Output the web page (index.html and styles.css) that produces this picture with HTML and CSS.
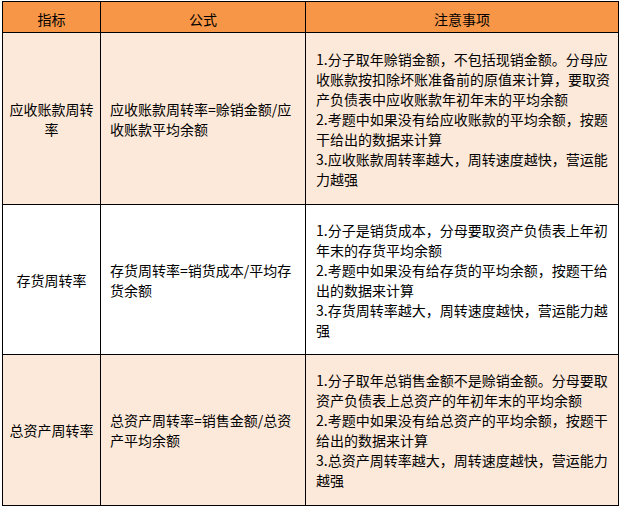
FILE: index.html
```html
<!DOCTYPE html>
<html lang="zh-CN">
<head>
<meta charset="utf-8">
<title>周转率指标</title>
<link rel="stylesheet" href="styles.css">
</head>
<body>
<table class="ratio-table">
  <colgroup>
    <col class="col-name">
    <col class="col-formula">
    <col class="col-notes">
  </colgroup>
  <thead>
    <tr class="row-head">
      <th>指标</th>
      <th>公式</th>
      <th>注意事项</th>
    </tr>
  </thead>
  <tbody>
    <tr class="row-a tint">
      <td class="name">应收账款周转率</td>
      <td class="formula">应收账款周转率=赊销金额/应收账款平均余额</td>
      <td class="notes">
        <div>1.分子取年赊销金额，不包括现销金额。分母应收账款按扣除坏账准备前的原值来计算，要取资产负债表中应收账款年初年末的平均余额</div>
        <div>2.考题中如果没有给应收账款的平均余额，按题干给出的数据来计算</div>
        <div>3.应收账款周转率越大，周转速度越快，营运能力越强</div>
      </td>
    </tr>
    <tr class="row-b">
      <td class="name">存货周转率</td>
      <td class="formula">存货周转率=销货成本/平均存货余额</td>
      <td class="notes">
        <div>1.分子是销货成本，分母要取资产负债表上年初年末的存货平均余额</div>
        <div>2.考题中如果没有给存货的平均余额，按题干给出的数据来计算</div>
        <div>3.存货周转率越大，周转速度越快，营运能力越强</div>
      </td>
    </tr>
    <tr class="row-c tint">
      <td class="name">总资产周转率</td>
      <td class="formula">总资产周转率=销售金额/总资产平均余额</td>
      <td class="notes">
        <div>1.分子取年总销售金额不是赊销金额。分母要取资产负债表上总资产的年初年末的平均余额</div>
        <div>2.考题中如果没有给总资产的平均余额，按题干给出的数据来计算</div>
        <div>3.总资产周转率越大，周转速度越快，营运能力越强</div>
      </td>
    </tr>
  </tbody>
</table>
</body>
</html>
```
FILE: styles.css
```css
html, body {
  margin: 0;
  padding: 0;
  background: #ffffff;
}

body {
  padding: 1px 0 0 2px;
  font-family: "Noto Sans CJK SC", "Noto Sans", sans-serif;
  font-size: 14px;
  line-height: 20px;
  color: #000000;
}

.ratio-table {
  table-layout: fixed;
  border-collapse: separate;
  border-spacing: 0;
  width: 617px;
  border-left: 1px solid #000;
  border-top: 1px solid #000;
}

.col-name { width: 98px; }
.col-formula { width: 205px; }
.col-notes { width: 313px; }

.ratio-table th,
.ratio-table td {
  box-sizing: border-box;
  border-right: 1px solid #000;
  border-bottom: 1px solid #000;
  vertical-align: middle;
  padding: 0;
}

.ratio-table th {
  height: 31px;
  padding-top: 4px;
  background: #f79646;
  font-weight: normal;
  text-align: center;
}

.tint td {
  background: #fde9d9;
}

.row-a td { height: 172px; }
.row-b td { height: 150px; }
.row-c td { height: 151px; }

.name {
  text-align: center;
  padding: 0 5px !important;
}

.formula {
  text-align: left;
  padding: 0 7px 0 9px !important;
}

.notes {
  text-align: left;
  padding: 0 4px 0 10px !important;
}
```
